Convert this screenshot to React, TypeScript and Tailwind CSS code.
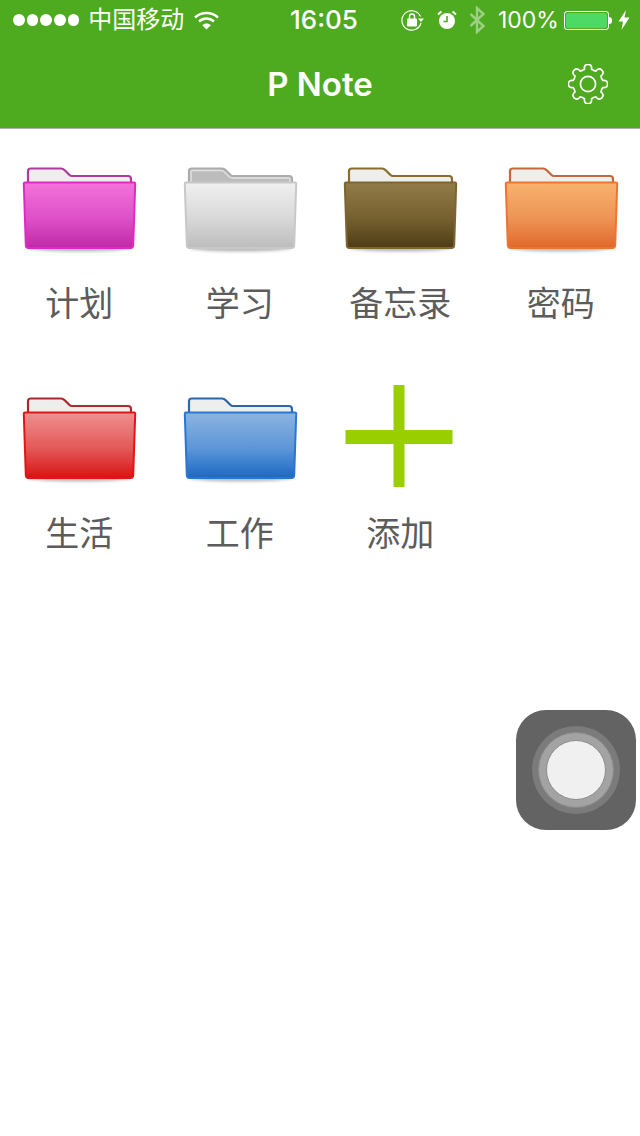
import React from 'react';

const CJK = "font-['Inter','Noto_Sans_CJK_SC',sans-serif]";

interface FolderColors {
    id: string;
    tabStroke: string;
    tabFill: string;
    border: string;
    top: string;
    mid: string;
    bottom: string;
}

const folders: (FolderColors & { label: string })[] = [
    { id: 'pink', label: '计划', tabStroke: '#b03a9e', tabFill: '#eeeeec', border: '#de2cc2', top: '#f472da', mid: '#de50c8', bottom: '#c02aa6' },
    { id: 'white', label: '学习', tabStroke: '#acacac', tabFill: '#bcbcbc', border: '#c8c8c8', top: '#f0f0f0', mid: '#d8d8d8', bottom: '#bcbcbc' },
    { id: 'brown', label: '备忘录', tabStroke: '#8a6d2a', tabFill: '#eeeeec', border: '#7d6530', top: '#927c48', mid: '#75602f', bottom: '#4f3c16' },
    { id: 'orange', label: '密码', tabStroke: '#c26a3c', tabFill: '#eeeeec', border: '#ec7430', top: '#f8b26e', mid: '#ee9455', bottom: '#e0682a' },
    { id: 'red', label: '生活', tabStroke: '#a82a2a', tabFill: '#eeeeec', border: '#e01818', top: '#f09090', mid: '#e45858', bottom: '#d81414' },
    { id: 'blue', label: '工作', tabStroke: '#2f66a8', tabFill: '#eeeeec', border: '#2a76d0', top: '#8cb4e2', mid: '#5c96d8', bottom: '#1c68c4' },
];

const FolderIcon: React.FC<{ colors: FolderColors }> = ({ colors }) => (
    <svg width="120" height="90" viewBox="0 0 120 90">
        <defs>
            <linearGradient id={`front-${colors.id}`} x1="0" y1="0" x2="0" y2="1">
                <stop offset="0" stopColor={colors.top} />
                <stop offset="0.55" stopColor={colors.mid} />
                <stop offset="1" stopColor={colors.bottom} />
            </linearGradient>
            <filter id={`soft-${colors.id}`} x="-5%" y="-5%" width="110%" height="110%">
                <feGaussianBlur stdDeviation="0.35" />
            </filter>
            <filter id={`shadow-${colors.id}`} x="-10%" y="-50%" width="120%" height="200%">
                <feGaussianBlur stdDeviation="1.8" />
            </filter>
        </defs>
        {/* shadow under the folder */}
        <ellipse cx="59.5" cy="83" rx="51" ry="3.5" fill="#000" fillOpacity="0.28" filter={`url(#shadow-${colors.id})`} />
        <g filter={`url(#soft-${colors.id})`}>
            {/* tab and paper */}
            <path
                d="M8 18 V6 Q8 3.5 11 3.5 H41 Q43 3.5 45 5.5 L49.5 10 Q50.5 11 52 11 H108 Q111 11 111 14 V18 Z"
                fill={colors.tabFill}
                stroke={colors.tabStroke}
                strokeWidth="2.2"
            />
            {colors.id === 'white' && (
                <path
                    d="M10 17 V6.5 Q10 5.5 11 5.5 H40 Q42 5.5 43.5 7 L48 11.5 Q49.5 13 52 13 H108 Q109 13 109 14 V17"
                    fill="none"
                    stroke="#e2e2e2"
                    strokeWidth="1.4"
                />
            )}
            {/* front */}
            <path
                d="M5 17.5 H114 Q115.3 17.5 115.2 19 L113.2 80 Q113.1 83 110.6 83 H8.4 Q5.9 83 5.8 80 L3.8 19 Q3.7 17.5 5 17.5 Z"
                fill={`url(#front-${colors.id})`}
                stroke={colors.border}
                strokeWidth="2"
            />
        </g>
    </svg>
);

// 8-tooth outline gear around the 20,20 centre of its viewBox
const gearPath = (() => {
    const pts: string[] = [];
    const teeth = 8;
    for (let i = 0; i < teeth; i++) {
        const a = (i * 2 * Math.PI) / teeth - Math.PI / 2;
        const step = (2 * Math.PI) / teeth;
        const p = (r: number, t: number) => `${(20 + r * Math.cos(t)).toFixed(2)} ${(20 + r * Math.sin(t)).toFixed(2)}`;
        pts.push(`${i === 0 ? 'M' : 'L'}${p(15.2, a - step * 0.3)}`);
        pts.push(`Q${p(20, a - step * 0.26)} ${p(19.6, a)}`);
        pts.push(`Q${p(20, a + step * 0.26)} ${p(15.2, a + step * 0.3)}`);
        pts.push(`Q${p(14.4, a + step * 0.5)} ${p(15.2, a + step * 0.7)}`);
    }
    return pts.join(' ') + ' Z';
})();

const StatusBar: React.FC = () => (
    <div className="flex h-10 items-center text-white">
        <div className="flex w-[290px] items-center pl-[13px]">
            <div className="flex gap-[2.2px]">
                {[0, 1, 2, 3, 4].map((i) => (
                    <span key={i} className="h-[11.5px] w-[11.5px] rounded-full bg-white" />
                ))}
            </div>
            <span className={`ml-[9px] text-[24px] leading-none ${CJK}`}>中国移动</span>
            <svg className="ml-[10px]" width="25" height="19" viewBox="0 0 25 19" fill="none" stroke="white" strokeWidth="2.4">
                <path d="M1 6.5 C7.5 0.5 17.5 0.5 24 6.5" />
                <path d="M5 10.5 C9.5 6.5 15.5 6.5 20 10.5" />
                <path d="M12.5 18.5 L8.2 14.2 C10.8 12 14.2 12 16.8 14.2 Z" fill="white" stroke="none" />
            </svg>
        </div>
        <span className="w-[67px] text-center font-['Inter',sans-serif] text-[26px] font-medium leading-none">16:05</span>
        <div className="ml-[44px] flex items-center">
            <svg width="23" height="22" viewBox="0 0 23 22" fill="none">
                <path d="M19.5 7.5 A9.7 9.7 0 1 0 20 14" stroke="white" strokeWidth="1.2" />
                <path d="M17 9.5 H23 L20 13 Z" fill="white" />
                <rect x="6" y="9.5" width="10" height="8" rx="1" fill="white" />
                <path d="M8.5 10 V7.5 A2.5 2.5 0 0 1 13.5 7.5 V10" stroke="white" strokeWidth="1.4" />
            </svg>
            <svg className="ml-[13px]" width="20" height="20" viewBox="0 0 20 20" fill="none">
                <circle cx="10" cy="11" r="8" fill="white" />
                <path d="M10 6 V11.5 H6.5" stroke="#4eaa1f" strokeWidth="1.6" />
                <path d="M1 4.5 L4.5 1.5 M19 4.5 L15.5 1.5" stroke="white" strokeWidth="2" />
            </svg>
            <svg className="ml-[12px]" width="17" height="28" viewBox="0 0 17 28" fill="none" stroke="white" strokeOpacity="0.45" strokeWidth="2.4">
                <path d="M1.5 8 L14.5 20 L8 26 V2 L14.5 8 L1.5 20" />
            </svg>
            <span className="ml-[12px] font-['Inter',sans-serif] text-[23px] leading-none">100%</span>
            <div className="ml-[5px] flex items-center">
                <div className="h-[19px] w-[45px] rounded-[3px] border border-white p-px">
                    <div className="h-full w-full rounded-[2px] bg-[#4cd964]" />
                </div>
                <div className="h-[7px] w-[3px] rounded-r-sm bg-white" />
            </div>
            <svg className="ml-[6px]" width="12" height="20" viewBox="0 0 12 20" fill="white">
                <path d="M8 0 L0.5 11.5 H5 L3.5 20 L11.5 7.5 H6.5 Z" />
            </svg>
        </div>
    </div>
);

const App: React.FC = () => (
    <div className="relative h-[1136px] w-[640px] overflow-hidden bg-white">
        <header className="h-[129px] border-b border-[#b2b2b2] bg-[#4eaa1f]">
            <StatusBar />
            <div className="relative flex h-[88px] items-center justify-center">
                <span className="font-['Inter',sans-serif] text-[33px] font-semibold leading-none text-white">P Note</span>
                <svg className="absolute right-[32px] top-[24px]" width="40" height="40" viewBox="0 0 40 40" fill="none" stroke="white" strokeWidth="1.7">
                    <path d={gearPath} strokeLinejoin="round" />
                    <circle cx="20" cy="20" r="7.6" />
                </svg>
            </div>
        </header>

        <main className="grid w-[642px] grid-cols-4 pt-9">
            {folders.map((f) => (
                <div key={f.id} className="flex h-[230px] flex-col items-center">
                    <FolderIcon colors={f} />
                    <span className={`mt-[29px] -ml-[2px] text-[34px] leading-[40px] text-[#5c5c5c] ${CJK}`}>{f.label}</span>
                </div>
            ))}
            <div className="flex h-[230px] flex-col items-center">
                <svg width="120" height="90" viewBox="0 0 120 90" className="overflow-visible">
                    <path d="M52.5 -10 H63.5 V35 H111.5 V49 H63.5 V92 H52.5 V49 H4.5 V35 H52.5 Z" fill="#99cf00" />
                </svg>
                <span className={`mt-[29px] -ml-[2px] text-[34px] leading-[40px] text-[#5c5c5c] ${CJK}`}>添加</span>
            </div>
        </main>

        {/* assistive touch */}
        <div className="absolute left-[516px] top-[710px] flex h-[120px] w-[120px] items-center justify-center rounded-[30px] bg-[#636363]">
            <div className="flex h-[88px] w-[88px] items-center justify-center rounded-full bg-[#7b7b7b]">
                <div className="flex h-[76px] w-[76px] items-center justify-center rounded-full border border-[#8a8a8a] bg-[#a3a3a3]">
                    <div className="h-[60px] w-[60px] rounded-full border border-[#8c8c8c] bg-[#f0f0f0]" />
                </div>
            </div>
        </div>
    </div>
);

export default App;
